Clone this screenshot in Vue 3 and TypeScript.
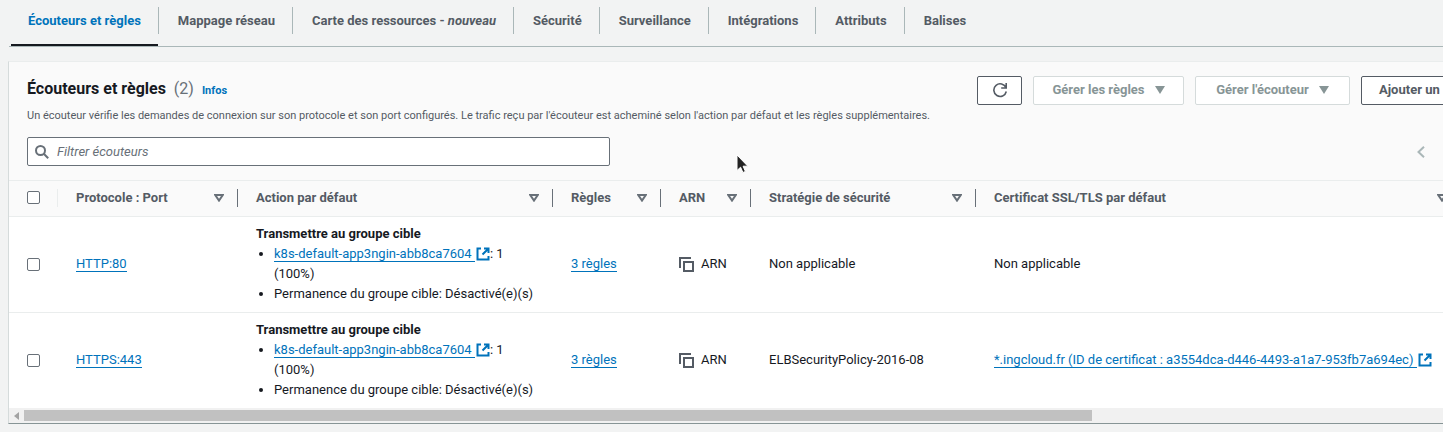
<script setup lang="ts">
import { ref } from 'vue'

interface Tab {
  label: string
  note?: string
}

interface Listener {
  protocol: string
  policy: string
  certificate: string
  certificateLink: boolean
}

const tabs: Tab[] = [
  { label: 'Écouteurs et règles' },
  { label: 'Mappage réseau' },
  { label: 'Carte des ressources - ', note: 'nouveau' },
  { label: 'Sécurité' },
  { label: 'Surveillance' },
  { label: 'Intégrations' },
  { label: 'Attributs' },
  { label: 'Balises' },
]

const columns: string[] = [
  'Protocole : Port',
  'Action par défaut',
  'Règles',
  'ARN',
  'Stratégie de sécurité',
  'Certificat SSL/TLS par défaut',
]

const listeners: Listener[] = [
  { protocol: 'HTTP:80', policy: 'Non applicable', certificate: 'Non applicable', certificateLink: false },
  {
    protocol: 'HTTPS:443',
    policy: 'ELBSecurityPolicy-2016-08',
    certificate: '*.ingcloud.fr (ID de certificat : a3554dca-d446-4493-a1a7-953fb7a694ec)',
    certificateLink: true,
  },
]

const active = ref(0)
const filter = ref('')
</script>

<template>
  <main class="page">
    <nav class="tabs" role="tablist">
      <div v-for="(tab, i) in tabs" :key="tab.label" class="tab" :class="{ active: i === active }">
        <button type="button" role="tab" :aria-selected="i === active" @click="active = i">
          {{ tab.label }}<em v-if="tab.note">{{ tab.note }}</em>
        </button>
      </div>
    </nav>

    <section class="panel">
      <header class="head">
        <div class="titlebar">
          <div class="titles">
            <h2>Écouteurs et règles <span class="count">(2)</span> <a href="#" class="info">Infos</a></h2>
            <p>Un écouteur vérifie les demandes de connexion sur son protocole et son port configurés. Le trafic reçu par l'écouteur est acheminé selon l'action par défaut et les règles supplémentaires.</p>
          </div>
          <div class="actions">
            <button type="button" class="btn refresh" aria-label="Actualiser">
              <svg viewBox="0 0 16 16" width="16" height="16"><path d="M14.200 1v5H9.200M14 5.800A6.300 6.300 0 1 0 14.300 9.500" /></svg>
            </button>
            <button type="button" class="btn rules" disabled>
              Gérer les règles<svg viewBox="0 0 10 8" width="10" height="8"><path d="M0 0h10L5 8z" /></svg>
            </button>
            <button type="button" class="btn listener" disabled>
              Gérer l'écouteur<svg viewBox="0 0 10 8" width="10" height="8"><path d="M0 0h10L5 8z" /></svg>
            </button>
            <button type="button" class="btn add">Ajouter un</button>
          </div>
        </div>
        <div class="tools">
          <label class="search">
            <svg viewBox="0 0 14 14" width="14" height="14"><circle cx="5.500" cy="5.500" r="4.500" /><path d="M8.800 8.800L13.200 13.200" /></svg>
            <input v-model="filter" type="text" placeholder="Filtrer écouteurs" aria-label="Filtrer écouteurs" />
          </label>
          <button type="button" class="prev" aria-label="Page précédente">
            <svg viewBox="0 0 8 12" width="8" height="12"><path d="M7 .8L1.500 6 7 11.200" /></svg>
          </button>
        </div>
      </header>

      <table>
        <colgroup>
          <col class="c-check" />
          <col class="c-proto" />
          <col class="c-action" />
          <col class="c-rules" />
          <col class="c-arn" />
          <col class="c-policy" />
          <col class="c-cert" />
          <col />
        </colgroup>
        <thead>
          <tr>
            <th class="check"><div><input type="checkbox" aria-label="Tout sélectionner" /></div></th>
            <th v-for="c in columns" :key="c" scope="col">
              <div class="th">
                <span>{{ c }}</span>
                <svg viewBox="0 0 10 8" width="10" height="8"><path d="M1.200 1h7.600L5 6.600z" /></svg>
              </div>
            </th>
            <td></td>
          </tr>
        </thead>
        <tbody>
          <tr v-for="l in listeners" :key="l.protocol">
            <td class="check"><div><input type="checkbox" :aria-label="l.protocol" /></div></td>
            <td><a href="#" class="link">{{ l.protocol }}</a></td>
            <td>
              <strong>Transmettre au groupe cible</strong>
              <ul>
                <li>
                  <a href="#" class="link">k8s-default-app3ngin-abb8ca7604&nbsp;</a><svg class="ext" viewBox="0 0 14 14" width="14" height="14"><path d="M5 1.500H1.500v11h11V9M8 1.500h4.500V6M12.300 1.700L6.500 7.500" /></svg>: 1<br />(100%)
                </li>
                <li>Permanence du groupe cible: Désactivé(e)(s)</li>
              </ul>
            </td>
            <td><a href="#" class="link">3 règles</a></td>
            <td>
              <button type="button" class="copy">
                <svg viewBox="0 0 15 15" width="15" height="15"><path d="M1 11V1h11M5 5h9v9H5z" /></svg>ARN
              </button>
            </td>
            <td>{{ l.policy }}</td>
            <td>
              <template v-if="l.certificateLink">
                <a href="#" class="link">{{ l.certificate }}&nbsp;</a><svg class="ext" viewBox="0 0 14 14" width="14" height="14"><path d="M5 1.500H1.500v11h11V9M8 1.500h4.500V6M12.300 1.700L6.500 7.500" /></svg>
              </template>
              <template v-else>{{ l.certificate }}</template>
            </td>
            <td></td>
          </tr>
        </tbody>
      </table>

      <div class="scrollbar">
        <svg viewBox="0 0 5 8" width="5" height="8"><path d="M5 0v8L0 4z" /></svg>
        <div class="thumb"></div>
      </div>
    </section>

    <svg class="cursor" viewBox="0 0 13 20" width="13" height="20"><path d="M1 1v15.500l3.600-3.300 2.300 5.300 2.500-1.100-2.300-5.200h4.700z" /></svg>
  </main>
</template>

<style>
body {
  background: #f2f3f3;
}
</style>

<style scoped>
.page {
  position: relative;
  overflow: hidden;
  padding-bottom: 8px;
  background: #f2f3f3;
  color: #16191f;
  font: 13px/20px Roboto, "Noto Sans", sans-serif;
}
button,
input {
  font: inherit;
  color: inherit;
}
svg {
  flex: none;
  fill: none;
}
.tabs {
  display: flex;
  height: 46px;
  margin-left: 9px;
  padding-left: 2px;
  border-bottom: 1px solid #aab7b8;
}
.tab {
  display: flex;
}
.tab + .tab::before {
  content: "";
  width: 1px;
  height: 27px;
  margin-top: 7px;
  background: #aab7b8;
}
.tab button {
  margin: 0;
  padding: 0 17px 4px 19px;
  border: 0;
  background: none;
  color: #545b64;
  font-weight: 700;
  white-space: nowrap;
}
.tab:first-child button {
  padding-left: 17px;
}
.tab.active button {
  color: #0073bb;
}
.tab.active {
  box-shadow: inset 0 -2px #16191f;
}
.panel {
  margin: 14px -97px 0 8px;
  border: 1px solid #eaeded;
  border-left-color: #d5dbdb;
  border-bottom-color: #879596;
  background: #fff;
}
.head {
  padding: 14px 18px;
  background: #fafafa;
  border-bottom: 1px solid #eaeded;
}
.titlebar {
  display: flex;
  justify-content: space-between;
}
h2 {
  margin: 0;
  font-size: 16px;
  line-height: 26px;
  white-space: nowrap;
}
.count {
  margin-left: 4px;
  color: #687078;
  font-weight: 400;
}
.info {
  margin-left: 4px;
  color: #0073bb;
  font-size: 11px;
  text-decoration: none;
}
p {
  margin: 3px 0 0;
  color: #545b64;
  font-size: 11px;
  line-height: 18px;
  white-space: nowrap;
}
.actions {
  display: flex;
  align-items: flex-start;
  gap: 11px;
}
.btn {
  display: flex;
  align-items: center;
  justify-content: center;
  gap: 10px;
  box-sizing: border-box;
  height: 29px;
  padding: 0 17px 2px;
  border: 1px solid #545b64;
  border-radius: 2px;
  background: #fff;
  color: #545b64;
  font-weight: 700;
  white-space: nowrap;
}
.btn:disabled {
  border-color: #d5dbdb;
  color: #879596;
}
.btn:disabled svg {
  fill: #879596;
}
.refresh {
  width: 45px;
  padding: 0 0 1px;
}
.refresh svg {
  stroke: #545b64;
  stroke-width: 1.6;
}
.rules {
  width: 151px;
}
.listener {
  width: 155px;
}
.add {
  width: 160px;
  justify-content: flex-start;
}
.tools {
  display: flex;
  align-items: center;
  justify-content: space-between;
  margin-top: 12px;
}
.search {
  display: flex;
  align-items: center;
  gap: 8px;
  box-sizing: border-box;
  width: 583px;
  height: 29px;
  padding: 0 7px;
  border: 1px solid #687078;
  border-radius: 2px;
  background: #fff;
}
.search svg {
  stroke: #687078;
  stroke-width: 2;
}
.search input {
  flex: 1;
  min-width: 0;
  padding: 0;
  border: 0;
  outline: 0;
  background: none;
}
.search input::placeholder {
  color: #687078;
  font-style: italic;
  opacity: 1;
}
.prev {
  display: flex;
  margin-right: 96px;
  padding: 0;
  border: 0;
  background: none;
}
.prev svg {
  stroke: #aab7b8;
  stroke-width: 2;
}
table {
  width: 100%;
  table-layout: fixed;
  border-collapse: separate;
  border-spacing: 0;
}
.c-check {
  width: 48px;
}
.c-proto {
  width: 180px;
}
.c-action {
  width: 315px;
}
.c-rules {
  width: 108px;
}
.c-arn {
  width: 90px;
}
.c-policy {
  width: 225px;
}
.c-cert {
  width: 485px;
}
th,
td {
  padding: 7px 0 8px 19px;
  border-bottom: 1px solid #eaeded;
  text-align: left;
  white-space: nowrap;
}
thead th,
thead td {
  padding: 7px 0 9px;
  background: #fafafa;
  color: #545b64;
}
tbody tr:last-child td {
  border-bottom: 0;
}
tbody .check {
  padding-left: 18px;
}
.check div {
  display: flex;
}
thead .check div {
  padding: 3px 0 3px 18px;
}
.check input {
  appearance: none;
  width: 13px;
  height: 13px;
  margin: 0;
  border: 1px solid #687078;
  border-radius: 2px;
  background: #fff;
}
.th {
  display: flex;
  align-items: center;
  justify-content: space-between;
  height: 18px;
  padding: 0 13px 0 18px;
  border-left: 1px solid #687078;
}
th:nth-child(2) .th {
  border-left-color: #eaeded;
}
.th svg {
  stroke: #687078;
  stroke-width: 2;
}
.link {
  color: #0073bb;
  text-decoration: none;
  border-bottom: 1px solid #0073bb;
}
.ext {
  margin-left: 1px;
  vertical-align: -3px;
  stroke: #0073bb;
  stroke-width: 2;
}
ul {
  margin: 0;
  padding-left: 18px;
}
.copy {
  display: flex;
  align-items: center;
  gap: 7px;
  padding: 0;
  border: 0;
  background: none;
}
.copy svg {
  stroke: #545b64;
  stroke-width: 2;
}
.scrollbar {
  display: flex;
  align-items: center;
  gap: 5px;
  height: 15px;
  padding-left: 5px;
  background: #f1f1f1;
}
.scrollbar svg {
  fill: #a3a3a3;
}
.thumb {
  width: 70%;
  height: 11px;
  background: #c1c1c1;
}
.cursor {
  position: absolute;
  left: 736px;
  top: 154px;
  fill: #222;
  stroke: #fff;
}
</style>
